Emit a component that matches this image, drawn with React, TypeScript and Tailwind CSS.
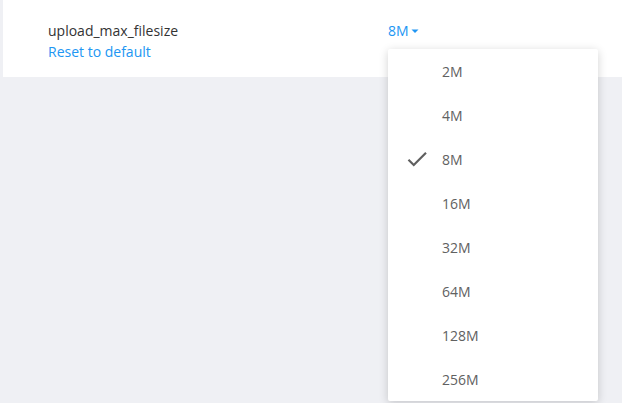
import { useState } from "react";

const options = ["2M", "4M", "8M", "16M", "32M", "64M", "128M", "256M"];

function CheckIcon() {
  return (
    <svg width="26" height="26" viewBox="0 0 24 24" className="text-[#5f5f5f]">
      <path d="M9 16.17 4.83 12l-1.42 1.41L9 19 21 7l-1.41-1.41z" fill="currentColor" />
    </svg>
  );
}

export default function App() {
  const [value] = useState("8M");

  return (
    <div
      className="w-[622px] h-[403px] overflow-hidden bg-[#eff0f4] pl-[3px]"
      style={{ fontFamily: '"Open Sans", "Noto Sans", sans-serif' }}
    >
      <div className="relative bg-white h-[77px] flex items-start pt-[20px] pl-[45px]">
        <div className="w-[340px] flex flex-col">
          <span className="text-[14px] leading-[21px] text-[#333333]">upload_max_filesize</span>
          <button className="text-left text-[14px] leading-[22px] text-[#2196f3]">Reset to default</button>
        </div>
        <button className="flex items-center text-[14px] leading-[21px] text-[#2196f3]">
          {value}
          <svg width="10" height="10" viewBox="0 0 10 10" className="ml-[1px] mt-[1px]">
            <path d="M1.5 3.5h7L5 7z" fill="#2196f3" />
          </svg>
        </button>

        {/* dropdown menu */}
        <div className="absolute left-[385px] top-[49px] w-[210px] bg-white shadow-[0_2px_10px_rgba(0,0,0,0.18)] rounded-[2px]">
          {options.map((opt) => (
            <div key={opt} className="h-[44px] flex items-center text-[14px] text-[#616161]">
              <div className="w-[54px] flex justify-end pr-[12px]">
                {opt === value && <CheckIcon />}
              </div>
              <span>{opt}</span>
            </div>
          ))}
        </div>
      </div>
    </div>
  );
}
